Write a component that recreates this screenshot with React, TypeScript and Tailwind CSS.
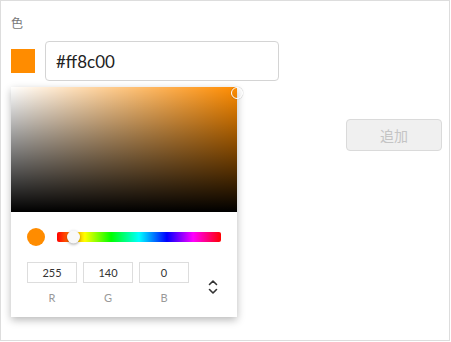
import { useState } from 'react';

const FONT = "font-['Lato','Noto_Sans_CJK_JP',sans-serif]";

function Stepper() {
  return (
    <svg width="12" height="18" viewBox="0 0 12 18" fill="none" stroke="#333" strokeWidth="1.6" strokeLinecap="round" strokeLinejoin="round">
      <path d="M2.5 6.5 L6 3 L9.5 6.5" />
      <path d="M2.5 11.5 L6 15 L9.5 11.5" />
    </svg>
  );
}

export default function App() {
  const [hex, setHex] = useState('#ff8c00');
  const rgb = [
    { label: 'R', value: 255 },
    { label: 'G', value: 140 },
    { label: 'B', value: 0 },
  ];

  return (
    <div className={`relative w-[450px] h-[341px] border border-[#dddddd] bg-white px-[10px] pt-[14px] ${FONT}`}>
      <p className="text-[12px] leading-[18px] text-[#777]">色</p>

      {/* Color input row */}
      <div className="mt-[8px] flex items-center gap-[10px]">
        <div className="w-[24px] h-[24px] bg-[#ff8c00]" />
        <input
          value={hex}
          onChange={e => setHex(e.target.value)}
          className="w-[234px] h-[40px] rounded-[4px] border border-[#d4d4d4] px-[10px] text-[17px] text-[#222] outline-none"
        />
      </div>

      <div className="mt-[38px] flex justify-end">
        <button className="w-[96px] h-[32px] mr-[-3px] rounded-[4px] border border-[#dadada] bg-[#f0f0f0] text-[14px] text-[#c4c4c4]">
          追加
        </button>
      </div>

      {/* Picker popover */}
      <div className="absolute left-[10px] top-[86px] w-[226px] bg-white shadow-[0_3px_8px_rgba(0,0,0,0.28)]">
        <div className="relative h-[125px] bg-[#ff8c00]">
          <div className="absolute inset-0 bg-linear-to-r from-white to-transparent" />
          <div className="absolute inset-0 bg-linear-to-t from-black to-transparent" />
          <div className="absolute right-[-6px] top-0 w-[12px] h-[12px] rounded-full border-[1.5px] border-white shadow-[0_0_1px_rgba(0,0,0,0.5)]" />
        </div>

        <div className="px-[16px] pt-[16px] pb-[12px]">
          <div className="flex items-center gap-[12px]">
            <div className="w-[18px] h-[18px] rounded-full bg-[#ff8c00]" />
            <div className="relative flex-1 h-[10px] rounded-[2px] bg-[linear-gradient(to_right,#f00_0%,#ff0_17%,#0f0_33%,#0ff_50%,#00f_67%,#f0f_83%,#f00_100%)]">
              <div className="absolute left-[10px] top-1/2 -translate-y-1/2 w-[13px] h-[13px] rounded-full bg-[#f8f8f8] shadow-[0_1px_3px_rgba(0,0,0,0.35)]" />
            </div>
          </div>

          <div className="mt-[16px] flex items-start">
            <div className="flex gap-[6px]">
              {rgb.map(c => (
                <div key={c.label} className="flex flex-col items-center w-[50px]">
                  <input
                    readOnly
                    value={c.value}
                    className="w-[50px] h-[21px] border border-[#dddddd] text-center text-[11px] text-[#333] outline-none"
                  />
                  <span className="mt-[8px] text-[11px] leading-[14px] text-[#999]">{c.label}</span>
                </div>
              ))}
            </div>
            <div className="ml-[18px] mt-[16px]">
              <Stepper />
            </div>
          </div>
        </div>
      </div>
    </div>
  );
}
